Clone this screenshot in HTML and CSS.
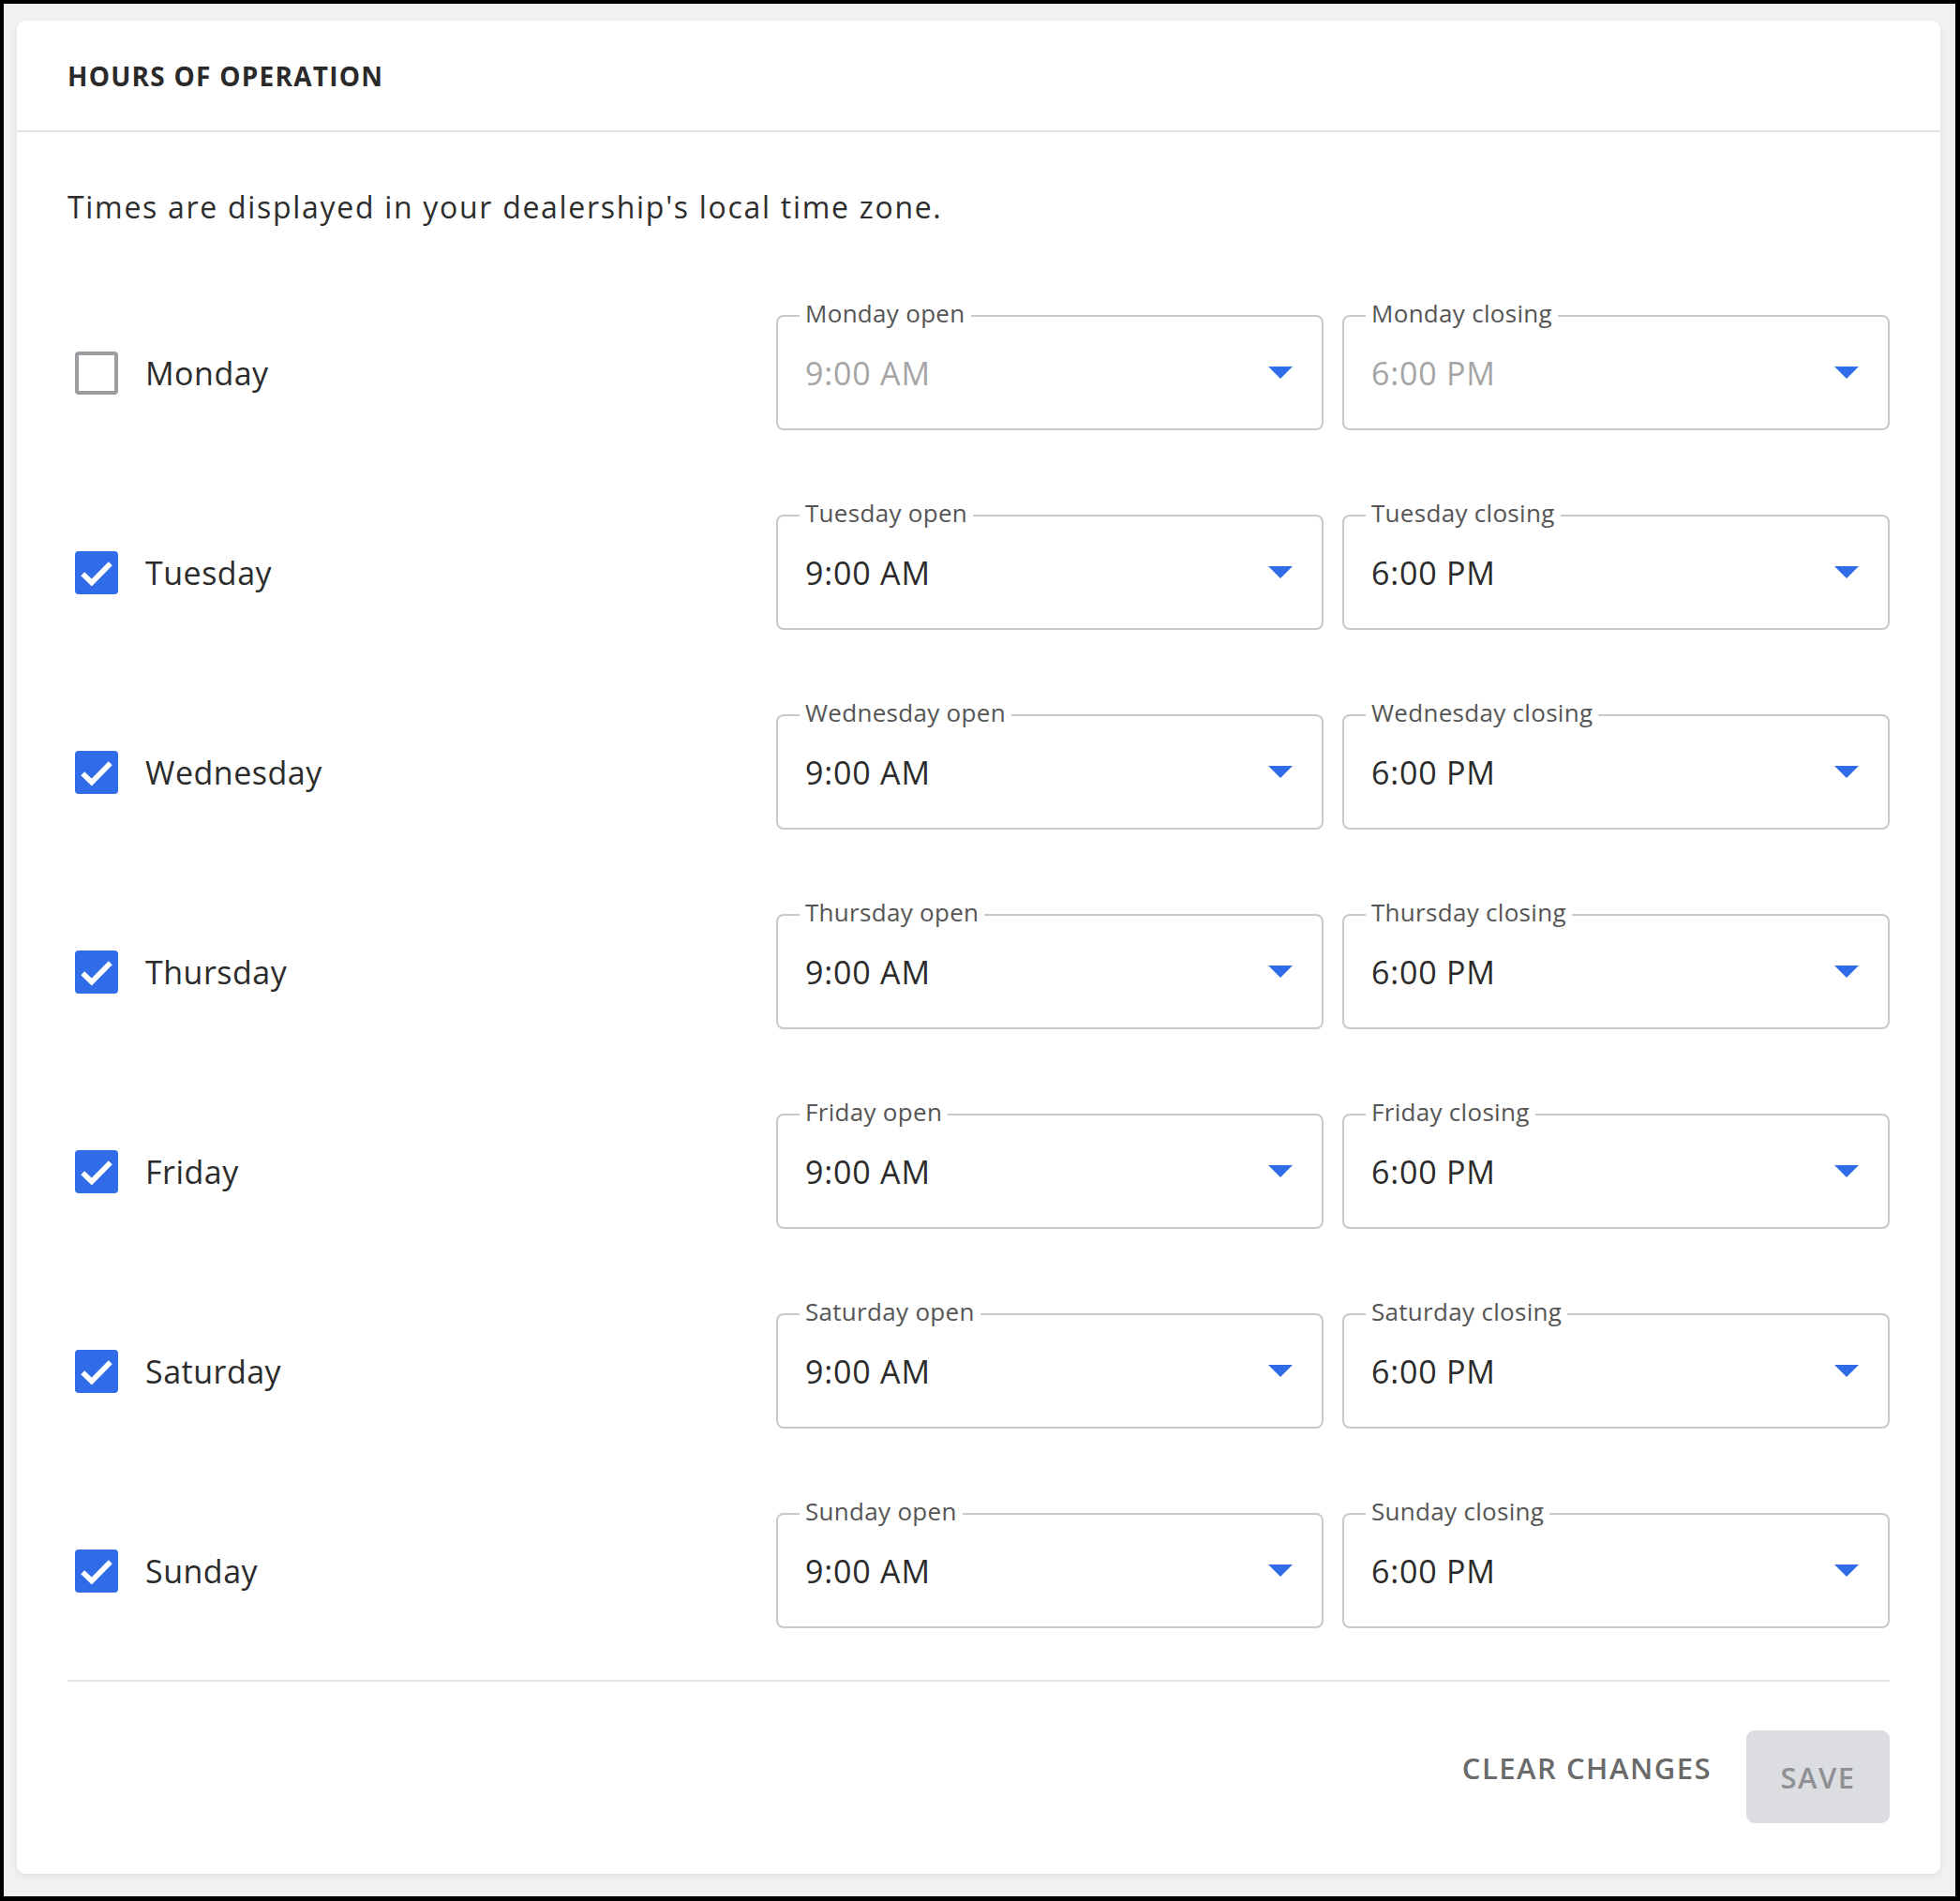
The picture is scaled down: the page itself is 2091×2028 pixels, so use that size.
FILE: index.html
```html
<!DOCTYPE html>
<html lang="en">
<head>
<meta charset="utf-8">
<title>Hours of Operation</title>
<link rel="stylesheet" href="styles.css">
</head>
<body>
<div class="screen">
  <section class="card">
    <header class="card-header">
      <h2 class="card-title">HOURS OF OPERATION</h2>
    </header>
    <div class="card-body">
      <p class="note">Times are displayed in your dealership's local time zone.</p>
      <div class="rows">
        <div class="row">
          <label class="day"><span class="box"></span><span class="day-name">Monday</span></label>
          <div class="field disabled"><span class="field-label">Monday open</span><span class="value">9:00 AM</span><svg class="arrow" viewBox="0 0 26 13"><polygon points="0,0 26,0 13,13"/></svg></div>
          <div class="field disabled"><span class="field-label">Monday closing</span><span class="value">6:00 PM</span><svg class="arrow" viewBox="0 0 26 13"><polygon points="0,0 26,0 13,13"/></svg></div>
        </div>
        <div class="row">
          <label class="day"><span class="box checked"><svg viewBox="0 0 24 24"><polyline points="4.3,12.6 9.3,17.5 19.7,6.9"/></svg></span><span class="day-name">Tuesday</span></label>
          <div class="field"><span class="field-label">Tuesday open</span><span class="value">9:00 AM</span><svg class="arrow" viewBox="0 0 26 13"><polygon points="0,0 26,0 13,13"/></svg></div>
          <div class="field"><span class="field-label">Tuesday closing</span><span class="value">6:00 PM</span><svg class="arrow" viewBox="0 0 26 13"><polygon points="0,0 26,0 13,13"/></svg></div>
        </div>
        <div class="row">
          <label class="day"><span class="box checked"><svg viewBox="0 0 24 24"><polyline points="4.3,12.6 9.3,17.5 19.7,6.9"/></svg></span><span class="day-name">Wednesday</span></label>
          <div class="field"><span class="field-label">Wednesday open</span><span class="value">9:00 AM</span><svg class="arrow" viewBox="0 0 26 13"><polygon points="0,0 26,0 13,13"/></svg></div>
          <div class="field"><span class="field-label">Wednesday closing</span><span class="value">6:00 PM</span><svg class="arrow" viewBox="0 0 26 13"><polygon points="0,0 26,0 13,13"/></svg></div>
        </div>
        <div class="row">
          <label class="day"><span class="box checked"><svg viewBox="0 0 24 24"><polyline points="4.3,12.6 9.3,17.5 19.7,6.9"/></svg></span><span class="day-name">Thursday</span></label>
          <div class="field"><span class="field-label">Thursday open</span><span class="value">9:00 AM</span><svg class="arrow" viewBox="0 0 26 13"><polygon points="0,0 26,0 13,13"/></svg></div>
          <div class="field"><span class="field-label">Thursday closing</span><span class="value">6:00 PM</span><svg class="arrow" viewBox="0 0 26 13"><polygon points="0,0 26,0 13,13"/></svg></div>
        </div>
        <div class="row">
          <label class="day"><span class="box checked"><svg viewBox="0 0 24 24"><polyline points="4.3,12.6 9.3,17.5 19.7,6.9"/></svg></span><span class="day-name">Friday</span></label>
          <div class="field"><span class="field-label">Friday open</span><span class="value">9:00 AM</span><svg class="arrow" viewBox="0 0 26 13"><polygon points="0,0 26,0 13,13"/></svg></div>
          <div class="field"><span class="field-label">Friday closing</span><span class="value">6:00 PM</span><svg class="arrow" viewBox="0 0 26 13"><polygon points="0,0 26,0 13,13"/></svg></div>
        </div>
        <div class="row">
          <label class="day"><span class="box checked"><svg viewBox="0 0 24 24"><polyline points="4.3,12.6 9.3,17.5 19.7,6.9"/></svg></span><span class="day-name">Saturday</span></label>
          <div class="field"><span class="field-label">Saturday open</span><span class="value">9:00 AM</span><svg class="arrow" viewBox="0 0 26 13"><polygon points="0,0 26,0 13,13"/></svg></div>
          <div class="field"><span class="field-label">Saturday closing</span><span class="value">6:00 PM</span><svg class="arrow" viewBox="0 0 26 13"><polygon points="0,0 26,0 13,13"/></svg></div>
        </div>
        <div class="row">
          <label class="day"><span class="box checked"><svg viewBox="0 0 24 24"><polyline points="4.3,12.6 9.3,17.5 19.7,6.9"/></svg></span><span class="day-name">Sunday</span></label>
          <div class="field"><span class="field-label">Sunday open</span><span class="value">9:00 AM</span><svg class="arrow" viewBox="0 0 26 13"><polygon points="0,0 26,0 13,13"/></svg></div>
          <div class="field"><span class="field-label">Sunday closing</span><span class="value">6:00 PM</span><svg class="arrow" viewBox="0 0 26 13"><polygon points="0,0 26,0 13,13"/></svg></div>
        </div>
      </div>
      <div class="footer">
        <button class="btn-text" type="button">CLEAR CHANGES</button>
        <button class="btn-save" type="button" disabled>SAVE</button>
      </div>
    </div>
  </section>
</div>
</body>
</html>
```
FILE: styles.css
```css
* { box-sizing: border-box; }

html, body {
  margin: 0;
  padding: 0;
  background: #000;
}

body {
  padding: 4px 5px 5px 4px;
  font-family: "Open Sans", "Liberation Sans", sans-serif;
  color: #2b2b2b;
}

.screen {
  background: #f0f1f3;
  height: 2019px;
  padding: 18px 16px 24px 14px;
}

.card {
  background: #fff;
  border-radius: 9px;
  box-shadow: 0 2px 6px rgba(0, 0, 0, 0.07);
  height: 1977px;
}

.card-header {
  height: 119px;
  display: flex;
  align-items: center;
  padding: 0 54px;
  border-bottom: 2px solid #e2e3e5;
}

.card-title {
  margin: 0;
  font-size: 28px;
  font-weight: 700;
  letter-spacing: 1.25px;
  color: #2a2a2a;
}

.card-body {
  padding: 0 54px;
}

.note {
  margin: 0;
  padding-top: 58px;
  font-size: 32px;
  line-height: 44px;
  letter-spacing: 1.7px;
  color: #2d2d2d;
}

.rows {
  display: grid;
  row-gap: 90px;
  margin-top: 93px;
}

.row {
  display: grid;
  grid-template-columns: 736px 584px 584px;
  column-gap: 20px;
  align-items: center;
  height: 123px;
}

.day {
  display: flex;
  align-items: center;
  padding-left: 8px;
}

.box {
  width: 46px;
  height: 46px;
  border: 4px solid #9c9da1;
  border-radius: 4px;
  background: #fff;
  display: flex;
  align-items: center;
  justify-content: center;
}

.box.checked {
  border: none;
  background: #306be8;
}

.box svg {
  width: 46px;
  height: 46px;
  fill: none;
  stroke: #fff;
  stroke-width: 2.9;
}

.day-name {
  margin-left: 29px;
  font-size: 34px;
  letter-spacing: 0.5px;
  color: #2b2b2b;
}

.field {
  position: relative;
  height: 123px;
  border: 2px solid #c9c9c9;
  border-radius: 8px;
  display: flex;
  align-items: center;
  justify-content: space-between;
  padding: 0 31px 0 29px;
}

.field-label {
  position: absolute;
  top: -19px;
  left: 23px;
  padding: 0 6px;
  background: #fff;
  font-size: 26px;
  line-height: 30px;
  color: #555;
  letter-spacing: 0.3px;
}

.value {
  font-size: 34px;
  letter-spacing: 0.8px;
  color: #2b2b2b;
}

.field.disabled .value {
  color: #a5a5a5;
}

.arrow {
  width: 26px;
  height: 13px;
  fill: #306be8;
}

.footer {
  margin-top: 55px;
  border-top: 2px solid #e2e3e5;
  padding-top: 52px;
  display: flex;
  justify-content: flex-end;
  align-items: center;
  gap: 37px;
}

.btn-text {
  font-family: inherit;
  background: none;
  border: none;
  padding: 0 0 20px 0;
  font-size: 31px;
  font-weight: 600;
  letter-spacing: 1.5px;
  color: #6a6a6a;
}

.btn-save {
  font-family: inherit;
  width: 153px;
  height: 99px;
  border: none;
  border-radius: 9px;
  background: #dcdde0;
  font-size: 31px;
  font-weight: 600;
  letter-spacing: 1.5px;
  color: #8f9094;
  padding: 0;
}
```
